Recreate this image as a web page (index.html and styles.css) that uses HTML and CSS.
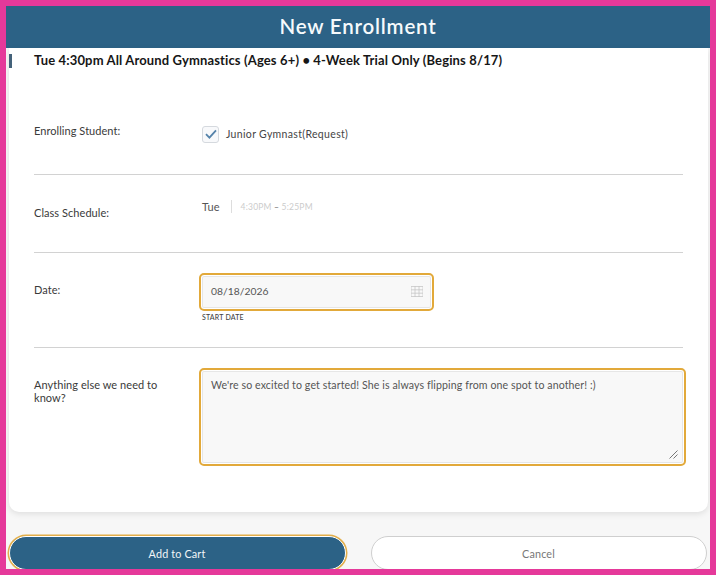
FILE: index.html
```html
<!DOCTYPE html>
<html lang="en">
<head>
<meta charset="utf-8">
<title>New Enrollment</title>
<link rel="stylesheet" href="styles.css">
</head>
<body>
<div class="frame">
  <header class="header"><h1>New Enrollment</h1></header>
  <main class="card">
    <div class="title-row"><span class="marker"></span><h2>Tue 4:30pm All Around Gymnastics (Ages 6+) • 4-Week Trial Only (Begins 8/17)</h2></div>
    <section class="row row-student">
      <div class="label">Enrolling Student:</div>
      <div class="student">
        <span class="check"><svg width="12" height="10" viewBox="0 0 12 10"><path d="M1 5.2 L4.4 8.6 L11 1.4" fill="none" stroke="#5583aa" stroke-width="1.8"/></svg></span>
        <span>Junior Gymnast(Request)</span>
      </div>
    </section>
    <section class="row row-schedule">
      <div class="label">Class Schedule:</div>
      <div class="schedule"><span class="day">Tue</span><span class="times">4:30PM <b>–</b> 5:25PM</span></div>
    </section>
    <section class="row row-date">
      <div class="label">Date:</div>
      <div>
        <div class="ring date-input">
          <span>08/18/2026</span>
          <svg width="12" height="11" viewBox="0 0 12 11"><path d="M0 0.5 H12 V10.5 H0 Z M0 3.8 H12 M0 7.2 H12 M4 0 V11 M8 0 V11" fill="none" stroke="#c6c6c6" stroke-width="0.8"/></svg>
        </div>
        <div class="hint">START DATE</div>
      </div>
    </section>
    <section class="row row-notes">
      <div class="label">Anything else we need to know?</div>
      <div class="ring notes">
        <span>We're so excited to get started! She is always flipping from one spot to another! :)</span>
        <svg class="grip" width="9" height="9" viewBox="0 0 9 9"><path d="M0.5 8.5 L8.5 0.5 M4.5 8.5 L8.5 4.5" stroke="#777" stroke-width="1"/></svg>
      </div>
    </section>
  </main>
  <footer class="actions">
    <button class="btn primary">Add to Cart</button>
    <button class="btn secondary">Cancel</button>
  </footer>
</div>
</body>
</html>
```
FILE: styles.css
```css
* { box-sizing: border-box; }
html, body { margin: 0; height: 100%; }
body { font-family: "Lato", "Noto Sans", sans-serif; color: #3c3c3c; }
.frame {
  width: 716px; height: 575px; border: 6px solid #e5399a;
  background: #f7f7f7; overflow: hidden;
}
.header { height: 42px; background: #2c6286; display: flex; align-items: center; justify-content: center; }
.header h1 { margin: 0 0 3px; color: #f6fafc; font-size: 20.5px; font-weight: 600; letter-spacing: .8px; }
.card {
  margin: 0 2px 0 3px; height: 464px; background: #fff; border-radius: 0 0 10px 10px;
  box-shadow: 0 2px 6px rgba(0,0,0,.1); padding: 0 25px;
}
.title-row { height: 24px; display: flex; align-items: center; position: relative; }
.title-row h2 { margin: 0 0 1px; font-size: 13px; font-weight: 700; color: #161616; letter-spacing: .14px; white-space: nowrap; }
.marker { position: absolute; left: -25px; top: 6px; width: 3px; height: 14px; background: #44627a; }
.row { display: grid; grid-template-columns: 165px 1fr; border-bottom: 1px solid #d2d2d2; }
.label { font-size: 11px; line-height: 13px; letter-spacing: .05px; color: #3a3a3a; font-weight: 400; }
.row-student { height: 103px; padding-top: 52px; }
.student { display: flex; align-items: center; gap: 7px; font-size: 10.5px; letter-spacing: .33px; height: 18px; margin-top: 1px; margin-left: 3px; color: #444; }
.check {
  width: 17px; height: 17px; border: 1px solid #d5d9de; border-radius: 3px; background: #f8f9fb;
  display: flex; align-items: center; justify-content: center;
}
.row-schedule { height: 78px; padding-top: 31px; }
.schedule { display: flex; align-items: center; height: 13px; margin-top: -6px; margin-left: 3px; }
.day { font-size: 11px; color: #555; padding-right: 11px; border-right: 1px solid #ddd; letter-spacing: .1px; }
.times { font-size: 8.5px; color: #cccccc; padding-left: 9px; letter-spacing: .2px; }
.times b { color: #777; font-weight: 400; }
.row-date { height: 95px; padding-top: 20px; }
.ring { border: 2px solid #e2a93a; border-radius: 5px; background: #f8f8f8; box-shadow: inset 0 0 0 1px #fff, inset 0 0 0 2px #e6e6e6; color: #555; }
.date-input { width: 235px; height: 38px; display: flex; align-items: center; justify-content: space-between; padding: 0 9px 2px 10px; font-size: 10.3px; letter-spacing: .05px; }
.hint { font-size: 7px; letter-spacing: .2px; color: #444; margin: 2px 0 0 3px; font-weight: 500; }
.row-date .label { margin-top: 10px; }
.row-notes { padding-top: 20px; border-bottom: 0; }
.row-notes .label { width: 135px; margin-top: 10px; }
.notes { width: 487px; height: 98px; padding: 9px 10px; position: relative; font-size: 10.6px; letter-spacing: .1px; }
.grip { position: absolute; right: 6px; bottom: 5px; }
.actions { display: flex; gap: 25px; padding: 24px 2px 0 2px; }
.btn { width: 336px; height: 34px; border-radius: 17px; font: 400 10.8px "Lato", "Noto Sans", sans-serif; letter-spacing: .15px; flex: none; }
.primary { background: #2c6286; color: #f3f6f8; border: 1px solid #fff; box-shadow: 0 0 0 1.5px #e2ae4a; margin-left: .5px; width: 337px; }
.secondary { background: #fff; color: #777; border: 1px solid #cfcfcf; }
```
